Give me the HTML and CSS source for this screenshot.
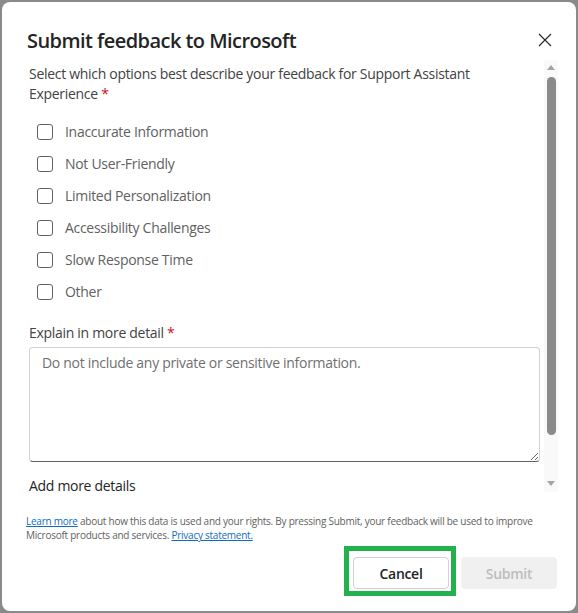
FILE: index.html
```html
<!DOCTYPE html>
<html lang="en">
<head>
<meta charset="utf-8">
<title>Submit feedback to Microsoft</title>
<link rel="stylesheet" href="styles.css">
</head>
<body>
<div class="page">
  <div class="dialog">
    <div class="header">
      <h1 class="title">Submit feedback to Microsoft</h1>
      <button class="close" aria-label="Close">
        <svg width="14" height="14" viewBox="0 0 14 14"><path d="M1 1 L13 13 M13 1 L1 13" stroke="#242424" stroke-width="1.1" fill="none"/></svg>
      </button>
    </div>
    <div class="body">
      <div class="content">
        <p class="desc">Select which options best describe your feedback for Support Assistant Experience <span class="req">*</span></p>
        <div class="options">
          <label class="opt"><span class="box"></span><span class="lbl">Inaccurate Information</span></label>
          <label class="opt"><span class="box"></span><span class="lbl">Not User-Friendly</span></label>
          <label class="opt"><span class="box"></span><span class="lbl">Limited Personalization</span></label>
          <label class="opt"><span class="box"></span><span class="lbl">Accessibility Challenges</span></label>
          <label class="opt"><span class="box"></span><span class="lbl">Slow Response Time</span></label>
          <label class="opt"><span class="box"></span><span class="lbl">Other</span></label>
        </div>
        <p class="field-label">Explain in more detail <span class="req">*</span></p>
        <textarea class="detail" placeholder="Do not include any private or sensitive information."></textarea>
        <p class="more">Add more details</p>
      </div>
      <div class="scrollbar">
        <span class="arrow up"></span>
        <span class="thumb"></span>
        <span class="arrow down"></span>
      </div>
    </div>
    <p class="legal"><a href="#">Learn more</a> about how this data is used and your rights. By pressing Submit, your feedback will be used to improve Microsoft products and services. <a href="#">Privacy statement.</a></p>
    <div class="actions">
      <button class="btn cancel">Cancel<span class="highlight"></span></button>
      <button class="btn submit" disabled>Submit</button>
    </div>
  </div>
</div>
</body>
</html>
```
FILE: styles.css
```css
* { box-sizing: border-box; }
html, body { margin: 0; padding: 0; }
body {
  background: #8a8a8a;
  height: 613px;
  overflow: hidden;
  font-family: "Open Sans", "Noto Sans", sans-serif;
  color: #242424;
}
.page {
  padding: 2px 2px 0 2px;
}
.dialog {
  background: #fff;
  border-radius: 8px;
  height: 609px;
  padding: 25px 18px 0 24px;
  display: flex;
  flex-direction: column;
}
.header {
  display: flex;
  align-items: center;
  justify-content: space-between;
  height: 28px;
}
.title {
  margin: 0;
  padding-left: 1px;
  font-size: 20px;
  line-height: 28px;
  font-weight: 600;
  color: #242424;
  letter-spacing: -0.55px;
}
.close {
  width: 24px;
  height: 24px;
  border: 0;
  background: none;
  padding: 0;
  margin-right: 1px;
  margin-top: -2px;
  display: flex;
  align-items: center;
  justify-content: center;
}
.body {
  margin-top: 5px;
  height: 436px;
  display: flex;
  overflow: hidden;
}
.content {
  flex: 1;
  padding: 4px 4px 0 3px;
  overflow: hidden;
  font-size: 14px;
  line-height: 20px;
  letter-spacing: -0.3px;
}
.desc {
  margin: 0;
  color: #424242;
}
.req { color: #c50f1f; }
.options {
  margin-top: 12px;
  display: flex;
  flex-direction: column;
}
.opt {
  height: 32px;
  display: flex;
  align-items: center;
  padding-left: 8px;
}
.box {
  width: 16px;
  height: 16px;
  border: 1px solid #616161;
  border-radius: 3px;
  flex: none;
}
.lbl {
  margin-left: 12px;
  color: #616161;
}
.field-label {
  margin: 15px 0 0;
  color: #424242;
}
.detail {
  display: block;
  margin-top: 4px;
  width: 100%;
  height: 115px;
  border: 1px solid #d1d1d1;
  border-bottom-color: #616161;
  border-radius: 4px;
  padding: 5px 12px;
  font-family: inherit;
  font-size: 14px;
  line-height: 20px;
  letter-spacing: -0.3px;
  color: #242424;
  resize: vertical;
  outline: none;
}
.detail::placeholder { color: #707070; }
.more {
  margin: 14px 0 0;
  color: #242424;
}
.scrollbar {
  width: 14px;
  height: 432px;
  flex: none;
  background: #f9f9f9;
  display: flex;
  flex-direction: column;
  align-items: center;
  padding: 5px 0 6px;
}
.arrow {
  width: 0;
  height: 0;
  border-left: 4px solid transparent;
  border-right: 4px solid transparent;
}
.arrow.up { border-bottom: 5px solid #a3a3a3; }
.arrow.down { border-top: 5px solid #a3a3a3; margin-top: auto; }
.thumb {
  width: 9px;
  height: 358px;
  margin-top: 7px;
  border-radius: 5px;
  background: #8a8a8a;
}
.legal {
  margin: 18px 0 0;
  font-size: 10px;
  line-height: 14px;
  color: #616161;
  letter-spacing: -0.25px;
  padding-right: 20px;
}
.legal a { color: #0f6cbd; }
.actions {
  margin-top: 15px;
  display: flex;
  justify-content: flex-end;
  gap: 12px;
  padding-right: 1px;
}
.btn {
  width: 96px;
  height: 32px;
  border-radius: 4px;
  font-family: inherit;
  font-size: 14px;
  font-weight: 600;
  letter-spacing: -0.3px;
}
.cancel {
  position: relative;
  background: #fff;
  border: 1px solid #d1d1d1;
  color: #242424;
}
.submit {
  background: #f0f0f0;
  border: 1px solid #f0f0f0;
  color: #bdbdbd;
}
.highlight {
  position: absolute;
  left: -10px;
  top: -12px;
  width: 112px;
  height: 50px;
  border: 5px solid #22b14c;
}
```
